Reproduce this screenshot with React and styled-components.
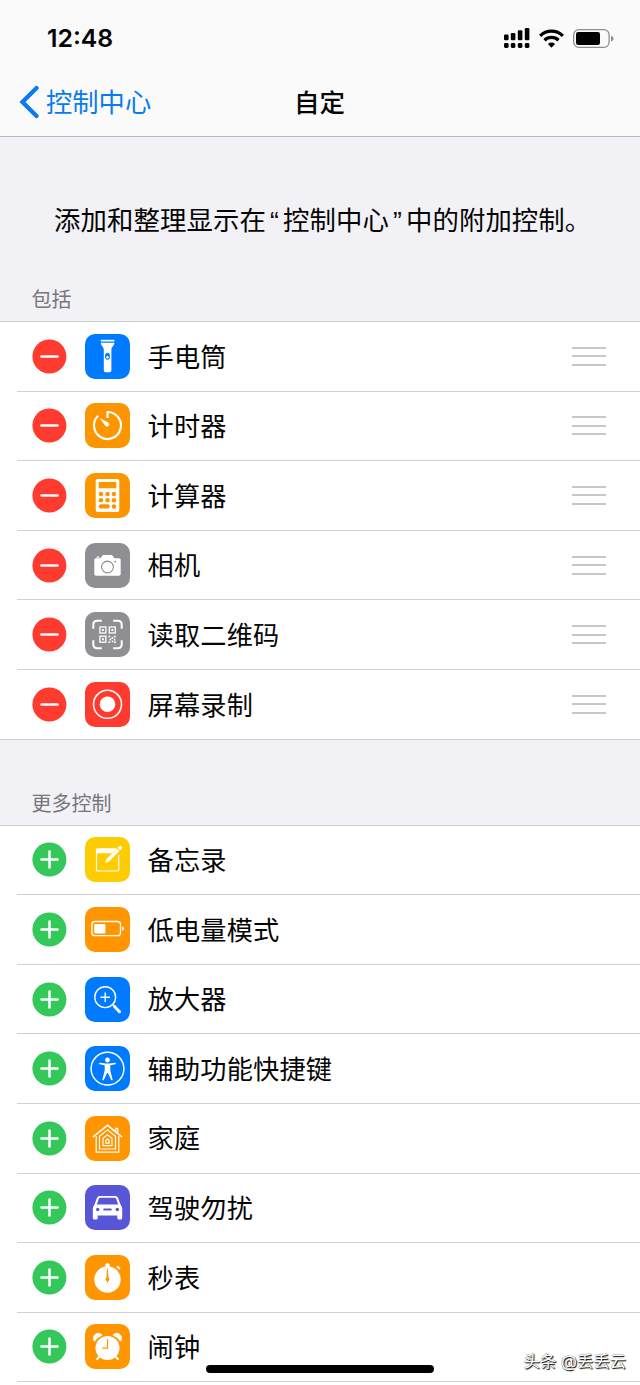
import styled, { createGlobalStyle } from 'styled-components'

const GlobalStyle = createGlobalStyle`
  * { box-sizing: border-box; }
  body {
    margin: 0;
    background: #f2f1f6;
    font-family: Inter, 'Noto Sans CJK SC', sans-serif;
    color: #050505;
  }
`

const Screen = styled.div`
  position: relative;
  width: 640px;
  height: 1385px;
  overflow: hidden;
  background: #f2f1f6;
`

const Header = styled.header`
  height: 137px;
  background: #fafafb;
  border-bottom: 1px solid #b9b9bc;
`

const StatusBar = styled.div`
  display: flex;
  justify-content: space-between;
  align-items: center;
  height: 76px;
  padding: 0 26px 0 47px;
`

const Time = styled.span`
  font-size: 24.8px;
  font-weight: 600;
`

const NavBar = styled.nav`
  display: grid;
  grid-template-columns: 1fr auto 1fr;
  align-items: center;
  height: 52px;
  padding: 0 20px 0 19px;
`

const Back = styled.a`
  display: flex;
  align-items: center;
  gap: 6px;
  color: #0a7bee;
  font-size: 26.3px;
  line-height: 38px;

  span {
    padding-top: 2px;
  }
`

const Title = styled.h1`
  margin: 0;
  padding-top: 2px;
  font-size: 25.5px;
  font-weight: 500;
  line-height: 38px;
`

const Intro = styled.p`
  margin: 0;
  padding: 63px 0 0 54px;
  height: 142px;
  font-size: 26.4px;
  line-height: 40px;
  letter-spacing: 0.1px;
  white-space: nowrap;
`

const Quote = styled.span`
  display: inline-block;
  width: 17px;
  font-family: 'Liberation Sans', sans-serif;
  line-height: 1;
  text-align: center;
`

const GroupTitle = styled.h2`
  display: flex;
  align-items: flex-end;
  height: ${props => props.height}px;
  margin: 0;
  padding: 0 0 7px 31.5px;
  color: #77767b;
  font-size: 20px;
  font-weight: 400;
  line-height: 28px;
`

const Row = styled.li`
  display: flex;
  align-items: center;
  height: 68.6px;
  margin-left: 17px;
  padding: 0 34px 0 15px;

  & + & {
    height: 69.6px;
    border-top: 1px solid #d0cfd3;
  }
`

const List = styled.ul`
  margin: 0;
  padding: 0;
  list-style: none;
  background: #fff;
  border-top: 1px solid #cfced2;
  border-bottom: 1px solid #cfced2;
`

// the second group runs on past the bottom of the screen
const OpenList = styled(List)`
  padding-bottom: 10px;
  border-bottom: 0;

  ${Row}:last-child {
    height: 70.4px;
    border-bottom: 1px solid #d0cfd3;
  }
`

const Toggle = styled.svg`
  flex: none;
  width: 35px;
  height: 35px;
  margin-right: 18px;
`

const Tile = styled.svg`
  flex: none;
  width: 45px;
  height: 45px;
  border-radius: 10px;
  background: ${props => props.$bg};
  margin-right: 17.5px;
`

const Label = styled.span`
  flex: 1;
  padding-top: 2.5px;
  font-size: 26.2px;
  line-height: 38px;
  letter-spacing: 0.2px;
`

const Grip = styled.div`
  width: 34px;
  height: 19px;
  display: flex;
  flex-direction: column;
  justify-content: space-between;

  i {
    height: 2px;
    background: #c7c7ca;
  }
`

const HomeIndicator = styled.div`
  position: absolute;
  left: 206px;
  bottom: 12px;
  width: 228px;
  height: 8px;
  border-radius: 4px;
  background: #000;
`

const Watermark = styled.div`
  position: absolute;
  right: 14px;
  bottom: 12px;
  color: #fff;
  font-size: 16.4px;
  line-height: 24px;
  text-shadow: 1px 1px 1px #000, 0 0 1px #333;
`

function SignalIcon() {
  return (
    <svg width="26" height="21" viewBox="0 0 26 21">
      <rect x="0" y="6.5" width="4.6" height="5.8" rx="1.2" />
      <rect x="6.8" y="5" width="4.6" height="7.3" rx="1.2" />
      <rect x="13.8" y="2.3" width="4.6" height="10" rx="1.2" />
      <rect x="20.8" y="0" width="4.6" height="12.3" rx="1.2" />
      {[0, 6.8, 13.8, 20.8].map(x => (
        <rect key={x} x={x} y="15" width="4.6" height="5" rx="1.4" />
      ))}
    </svg>
  )
}

function WifiIcon() {
  return (
    <svg width="25" height="19" viewBox="0 0 25 19">
      <g fill="none" stroke="#000" strokeWidth="3.3">
        <path d="M1.2 6.8a16 16 0 0 1 22.6 0" />
        <path d="M5.5 11.2a10 10 0 0 1 14 0" />
      </g>
      <path d="M12.5 18.8l-3.6-3.9a5.2 5.2 0 0 1 7.2 0z" />
    </svg>
  )
}

function BatteryIcon() {
  return (
    <svg width="41" height="19" viewBox="0 0 41 19">
      <rect x="0.7" y="0.7" width="35.4" height="17.6" rx="5" fill="none" stroke="#8e8e90" strokeWidth="1.3" />
      <rect x="3" y="3" width="24" height="13" rx="2.2" />
      <path d="M38 6.7c3.4 0.8 3.4 5 0 5.8z" fill="#8e8e90" />
    </svg>
  )
}

const StatusIcons = styled.div`
  display: flex;
  align-items: center;
  gap: 9px;
`

const icons = {
  torch: (
    <g fill="#fff">
      <rect x="15.8" y="5.8" width="13.6" height="1.7" />
      <path d="M15.8 8.7h13.6c0 3.2-3 3.8-3 7v20.8q0 1.8-1.8 1.8h-4q-1.8 0-1.8-1.8V15.7c0-3.2-3-3.8-3-7z" />
      <ellipse cx="22.5" cy="22.3" rx="2.5" ry="3.5" fill="#0a7cff" />
      <circle cx="22.5" cy="23.2" r="1.2" />
    </g>
  ),
  timer: (
    <g>
      <path d="M13.2 12.7a13.5 13.5 0 1 0 9.3-3.7v6" fill="none" stroke="#fff" strokeWidth="2.2" />
      <path d="M15.5 15.8l7.9 4.3a2 2 0 0 1-2.6 3z" fill="#fff" stroke="#fff" strokeWidth="0.6" />
    </g>
  ),
  calculator: (
    <g>
      <rect x="10.7" y="6" width="23.6" height="33" rx="2" fill="#fff" />
      <g fill="#fb9500">
        <rect x="13.7" y="9" width="17.6" height="6.2" rx="0.5" />
        {[21, 27.2].map(y => [16, 22.5, 28.9].map(x => <circle key={x + '-' + y} cx={x} cy={y} r="2.25" />))}
        <rect x="13.7" y="31.3" width="11.1" height="4.2" rx="2.1" />
        <circle cx="28.9" cy="33.4" r="2.25" />
      </g>
    </g>
  ),
  camera: (
    <g fill="#fff">
      <path d="M11 15.2h4.5l2-2.6q.4-.5 1-.5h7.9q.6 0 1 .5l2 2.6H34q1.7 0 1.7 1.7v14.2q0 1.7-1.7 1.7H11q-1.7 0-1.7-1.7V16.9q0-1.7 1.7-1.7z" />
      <rect x="11.5" y="13.5" width="3" height="1.2" rx="0.5" />
      <circle cx="22.5" cy="24" r="5.9" stroke="#8e8e93" strokeWidth="1.1" />
      <circle cx="30.2" cy="18.7" r="0.9" fill="#8e8e93" />
    </g>
  ),
  qr: (
    <g>
      <path
        d="M16.8 8.7h-4.5q-4 0-4 4v4M28.2 8.7h4.5q4 0 4 4v4M16.8 36.3h-4.5q-4 0-4-4v-4M28.2 36.3h4.5q4 0 4-4v-4"
        fill="none" stroke="#fff" strokeWidth="2"
      />
      <g fill="none" stroke="#fff" strokeWidth="1.3">
        <rect x="14.9" y="15" width="6" height="6" />
        <rect x="24.3" y="15" width="6" height="6" />
        <rect x="14.9" y="24.2" width="6" height="6" />
      </g>
      <g fill="#fff">
        <rect x="16.9" y="17" width="2" height="2" />
        <rect x="26.3" y="17" width="2" height="2" />
        <rect x="16.9" y="26.2" width="2" height="2" />
        <rect x="23.5" y="23.5" width="1.7" height="1.7" />
        <rect x="29" y="23.7" width="1.7" height="1.7" />
        <rect x="26.5" y="25.1" width="1.9" height="1.9" />
        <rect x="24.5" y="26.6" width="1.7" height="1.7" />
        <rect x="29" y="27" width="1.5" height="1.5" />
        <rect x="23.5" y="29.2" width="1.7" height="1.7" />
        <rect x="26.7" y="28.6" width="1.7" height="1.7" />
        <rect x="29.2" y="29.4" width="1.7" height="1.7" />
      </g>
    </g>
  ),
  record: (
    <g>
      <circle cx="22.5" cy="22.3" r="14" fill="none" stroke="#fff" strokeWidth="1.6" />
      <circle cx="22.5" cy="22.3" r="7.8" fill="#fff" />
    </g>
  ),
  notes: (
    <g>
      <path d="M33.7 18v15.2q0 .8-.8.8H12.3q-.8 0-.8-.8V12" fill="none" stroke="#fff" strokeWidth="1.2" />
      <path d="M12.3 11.3h19.3L27 16.2H11v-3.6q0-1.3 1.3-1.3z" fill="#fff" />
      <path d="M20 26l1.7-4.2L32 11.5l2.5 2.5-10.3 10.3zM32.7 10.8l1.7-1.7q.9-.8 1.7 0l.8.8q.8.9 0 1.7l-1.7 1.7z" fill="#fff" />
    </g>
  ),
  lowPower: (
    <g>
      <rect x="6.9" y="14.5" width="28.6" height="14.2" rx="3" fill="none" stroke="#fff" strokeWidth="1.3" />
      <rect x="9.2" y="16.9" width="11.2" height="9.5" rx="1" fill="#fff" />
      <path d="M37.1 19.6c2.5.6 2.5 3.5 0 4.1z" fill="#fff" />
    </g>
  ),
  magnifier: (
    <g fill="none" stroke="#fff" strokeLinecap="round">
      <circle cx="20.2" cy="20.2" r="10.4" strokeWidth="1.4" />
      <path d="M20.2 16v8.4M16 20.2h8.4" strokeWidth="1.4" />
      <path d="M27.7 27.7l2.2 2.2" strokeWidth="1.8" />
      <path d="M29.7 29.7l4.8 5" strokeWidth="3" />
    </g>
  ),
  accessibility: (
    <g>
      <circle cx="22.5" cy="22.7" r="16.4" fill="none" stroke="#fff" strokeWidth="1.5" />
      <circle cx="22.5" cy="14" r="2.4" fill="#fff" />
      <path d="M14.9 16.7l5.5.8h4.2l5.5-.8q.9 0 .9.7t-.7.8l-5 1v5.2l2.3 9q.1.8-.6.9t-.9-.6L22.9 27h-.8l-3.2 6.7q-.3.7-.9.6t-.6-.9l2.3-9v-5.2l-5-1q-.7-.1-.7-.8t.9-.7z" fill="#fff" />
    </g>
  ),
  home: (
    <g fill="none" stroke="#fff" strokeWidth="1.2">
      <path d="M7.8 21.2L22.5 9.3l14.7 11.9" strokeWidth="1.5" />
      <path d="M30.7 15.2v-2.8h2v4.4" />
      <path d="M11.2 20v16.2h22.6V20" />
      <path d="M14.5 33V20.3l8-6.400 8 6.4V33z" />
      <path d="M18 29.7v-7.4l4.500-3.5 4.500 3.5v7.4z" />
      <path d="M20.9 27.1v-2.8l1.6-1.200 1.6 1.2v2.8z" />
    </g>
  ),
  car: (
    <g>
      <path
        fillRule="evenodd"
        d="M15 11h15q2.4 0 3.2 2.3l2.5 6.800Q37.2 21.600 37.2 24v9q0 1.5-1.5 1.5h-1.9q-1.5 0-1.5-1.5v-2.500H12.7V33q0 1.5-1.5 1.5H9.3q-1.5 0-1.5-1.5v-9q0-2.400 1.5-3.900l2.5-6.800Q12.6 11 15 11zm.4 1.700q-1.3 0-1.7 1.200l-1.9 5.700h21.4l-1.9-5.700q-.4-1.200-1.7-1.200z"
        fill="#fff"
      />
      <g fill="#5856d6">
        <circle cx="12.7" cy="24.5" r="1.7" />
        <circle cx="32.3" cy="24.5" r="1.7" />
        <rect x="18.2" y="23.6" width="8.6" height="1.8" rx="0.9" />
      </g>
    </g>
  ),
  stopwatch: (
    <g>
      <circle cx="22.5" cy="24.5" r="13.2" fill="#fff" />
      <path d="M20.5 12V9.3q0-1 2-1t2 1V12z" fill="#fff" />
      <path d="M32 11.2l2.8 2.7" stroke="#fff" strokeWidth="2.2" />
      <path d="M22 13.8h1l.5 8.6a2.2 2.2 0 0 1-.5 3.9v1.5h-1v-1.5a2.2 2.2 0 0 1-.5-3.9z" fill="#fb9500" />
    </g>
  ),
  alarm: (
    <g>
      <circle cx="22.5" cy="24" r="12" fill="#fff" />
      <path d="M9.5 17.2a4.7 4.7 0 0 1 7.5-6q-5 1.6-7.5 6zM35.5 17.2a4.7 4.7 0 0 0-7.5-6q5 1.6 7.5 6z" fill="#fff" stroke="#fff" strokeWidth="1" />
      <path d="M14.5 32.5l-3 3.2M30.5 32.5l3 3.2" stroke="#fff" strokeWidth="2" />
      <path d="M22.5 15.2v9h-5.3" fill="none" stroke="#fb9500" strokeWidth="1.2" />
    </g>
  ),
}

const included = [
  { icon: 'torch', bg: '#007aff', content: '手电筒' },
  { icon: 'timer', bg: '#fb9500', content: '计时器' },
  { icon: 'calculator', bg: '#fb9500', content: '计算器' },
  { icon: 'camera', bg: '#8f8e92', content: '相机' },
  { icon: 'qr', bg: '#8f8e92', content: '读取二维码' },
  { icon: 'record', bg: '#ff3b30', content: '屏幕录制' },
]

const more = [
  { icon: 'notes', bg: '#fecc02', content: '备忘录' },
  { icon: 'lowPower', bg: '#ff9500', content: '低电量模式' },
  { icon: 'magnifier', bg: '#007aff', content: '放大器' },
  { icon: 'accessibility', bg: '#007aff', content: '辅助功能快捷键' },
  { icon: 'home', bg: '#ff9500', content: '家庭' },
  { icon: 'car', bg: '#5856d6', content: '驾驶勿扰' },
  { icon: 'stopwatch', bg: '#ff9500', content: '秒表' },
  { icon: 'alarm', bg: '#ff9500', content: '闹钟' },
]

function ControlRow({ icon, bg, content, added }) {
  return (
    <Row>
      <Toggle viewBox="0 0 35 35">
        <circle cx="17.4" cy="17.5" r="17" fill={added ? '#ff3b30' : '#34c759'} />
        <path
          d={added ? 'M9.5 17.5h16' : 'M9.5 17.5h16M17.5 9.5v16'}
          stroke="#fff" strokeWidth="2.5" strokeLinecap="round"
        />
      </Toggle>
      <Tile viewBox="0 0 45 45" $bg={bg}>{icons[icon]}</Tile>
      <Label>{content}</Label>
      {added && <Grip><i /><i /><i /></Grip>}
    </Row>
  )
}

export default function App() {
  return (
    <>
      <GlobalStyle />
      <Screen>
        <Header>
          <StatusBar>
            <Time>12:48</Time>
            <StatusIcons>
              <SignalIcon />
              <WifiIcon />
              <BatteryIcon />
            </StatusIcons>
          </StatusBar>
          <NavBar>
            <Back>
              <svg width="21" height="34" viewBox="0 0 21 34">
                <path d="M17.5 3L3.5 17l14 14" fill="none" stroke="#0a7bee" strokeWidth="4.3" strokeLinecap="round" />
              </svg>
              <span>控制中心</span>
            </Back>
            <Title>自定</Title>
          </NavBar>
        </Header>

        <Intro>
          添加和整理显示在<Quote>“</Quote>控制中心<Quote>”</Quote>中的附加控制。
        </Intro>

        <GroupTitle height={42}>包括</GroupTitle>
        <List>
          {included.map(item => <ControlRow key={item.icon} {...item} added />)}
        </List>

        <GroupTitle height={85}>更多控制</GroupTitle>
        <OpenList>
          {more.map(item => <ControlRow key={item.icon} {...item} />)}
        </OpenList>

        <Watermark>头条 @丢丢云</Watermark>
        <HomeIndicator />
      </Screen>
    </>
  )
}
